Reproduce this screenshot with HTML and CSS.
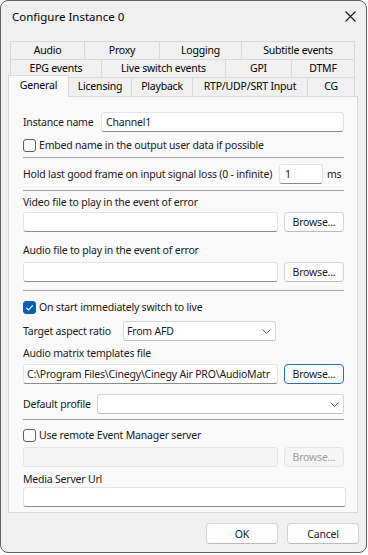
FILE: index.html
```html
<!DOCTYPE html>
<html lang="en">
<head>
  <meta charset="UTF-8" />
  <title>Configure Instance 0</title>
  <link rel="stylesheet" href="styles.css">
</head>
<body>
  <div class="dialog">
    <div class="titlebar">
      <span class="title">Configure Instance 0</span>
      <svg class="close" width="11" height="11" viewBox="0 0 11 11">
        <path d="M0.5 0.5 L10.5 10.5 M10.5 0.5 L0.5 10.5" stroke="#1b1b1b" stroke-width="1.1" fill="none"/>
      </svg>
    </div>

    <div class="content">
      <div class="tabs">
        <div class="tab-row row-a">
          <div class="tab">Audio</div>
          <div class="tab">Proxy</div>
          <div class="tab">Logging</div>
          <div class="tab">Subtitle events</div>
        </div>
        <div class="tab-row row-b">
          <div class="tab">EPG events</div>
          <div class="tab">Live switch events</div>
          <div class="tab">GPI</div>
          <div class="tab">DTMF</div>
        </div>
        <div class="tab-row row-c">
          <div class="tab active">General</div>
          <div class="tab">Licensing</div>
          <div class="tab">Playback</div>
          <div class="tab">RTP/UDP/SRT Input</div>
          <div class="tab">CG</div>
        </div>
      </div>

      <div class="panel">
        <div class="row first">
          <span class="label lbl-instance">Instance name</span>
          <div class="edit grow">Channel1</div>
        </div>

        <div class="row check-row">
          <span class="checkbox"></span>
          <span>Embed name in the output user data if possible</span>
        </div>

        <div class="sep sep-1"></div>

        <div class="row hold-row">
          <span class="label">Hold last good frame on input signal loss (0 - infinite)</span>
          <div class="edit hold">1</div>
          <span class="unit">ms</span>
        </div>

        <div class="sep sep-2"></div>

        <div class="caption cap-video">Video file to play in the event of error</div>
        <div class="row file-row r-video">
          <div class="edit grow"></div>
          <button class="btn browse">Browse...</button>
        </div>

        <div class="caption cap-audio">Audio file to play in the event of error</div>
        <div class="row file-row r-audio">
          <div class="edit grow"></div>
          <button class="btn browse">Browse...</button>
        </div>

        <div class="sep sep-3"></div>

        <div class="row check-row live-row">
          <span class="checkbox checked">
            <svg width="13" height="13" viewBox="0 0 13 13">
              <path d="M3.3 6.8 L5.5 9 L9.8 4.3" stroke="#fff" stroke-width="1.2" fill="none"/>
            </svg>
          </span>
          <span>On start immediately switch to live</span>
        </div>

        <div class="row target-row">
          <span class="label lbl-target">Target aspect ratio</span>
          <div class="combo target">
            <span>From AFD</span>
            <svg width="9" height="5" viewBox="0 0 9 5"><path d="M0.5 0.5 L4.5 4.5 L8.5 0.5" stroke="#5c5c5c" fill="none"/></svg>
          </div>
        </div>

        <div class="caption cap-matrix">Audio matrix templates file</div>
        <div class="row file-row r-matrix">
          <div class="edit grow path">C:\Program Files\Cinegy\Cinegy Air PRO\AudioMatr</div>
          <button class="btn browse focused">Browse...</button>
        </div>

        <div class="row profile-row">
          <span class="label lbl-profile">Default profile</span>
          <div class="combo grow">
            <span></span>
            <svg width="9" height="5" viewBox="0 0 9 5"><path d="M0.5 0.5 L4.5 4.5 L8.5 0.5" stroke="#5c5c5c" fill="none"/></svg>
          </div>
        </div>

        <div class="sep sep-4"></div>

        <div class="row check-row remote-row">
          <span class="checkbox"></span>
          <span>Use remote Event Manager server</span>
        </div>

        <div class="row file-row r-remote">
          <div class="edit grow disabled"></div>
          <button class="btn browse disabled">Browse...</button>
        </div>

        <div class="caption cap-media">Media Server Url</div>
        <div class="row media-row">
          <div class="edit grow"></div>
        </div>
      </div>
    </div>

    <div class="footer">
      <button class="btn dlg-btn">OK</button>
      <button class="btn dlg-btn">Cancel</button>
    </div>
  </div>
</body>
</html>
```

FILE: styles.css
```css
* { box-sizing: border-box; margin: 0; padding: 0; }
body {
  font-family: 'Noto Sans', 'Open Sans', sans-serif;
  font-size: 10.5px;
  letter-spacing: -0.2px;
  color: #1a1a1a;
  background: #ffffff;
}
.dialog {
  width: 367px;
  height: 553px;
  background: #f0f0f0;
  border: 1px solid #5d6066;
  border-radius: 8px;
  display: flex;
  flex-direction: column;
  overflow: hidden;
}
.titlebar {
  height: 30px;
  display: flex;
  align-items: center;
  justify-content: space-between;
  padding: 0 10px 0 11px;
}
.titlebar .title {
  font-size: 11.5px;
  letter-spacing: 0;
  color: #000;
}
.close {
  display: block;
  margin-top: 1px;
}
.content {
  padding: 10px 8px 0 7px;
}

/* tab strip */
.tabs {
  padding: 0 2px;
}
.tab-row {
  display: grid;
  height: 18px;
}
.row-a { grid-template-columns: 74px 75px 82px 114px; }
.row-b { grid-template-columns: 91px 124px 66px 64px; }
.row-c { grid-template-columns: 59px 62px 61px 115px 48px; height: 19px; }
.tab {
  border-top: 1px solid #d9d9d9;
  border-left: 1px solid #d9d9d9;
  background: #f0f0f0;
  text-align: center;
  line-height: 17px;
  white-space: nowrap;
  color: #000;
}
.tab:last-child {
  border-right: 1px solid #d9d9d9;
}
.tab.active {
  margin: -2px 0 -1px -2px;
  background: #f9f9f9;
  border-right: 1px solid #d9d9d9;
  position: relative;
  z-index: 1;
  line-height: 18px;
}
.tab.active + .tab {
  border-left: none;
}

/* page */
.panel {
  background: #f9f9f9;
  border: 1px solid #dadada;
  padding: 15px 13px 5px 14px;
  display: flex;
  flex-direction: column;
}
.row {
  display: flex;
  align-items: center;
  height: 20px;
}
.grow { flex: 1; min-width: 0; }
.label {
  white-space: nowrap;
  flex: none;
}
.lbl-instance { width: 78px; }
.lbl-target { width: 100px; }
.lbl-profile { width: 74px; }

.edit {
  height: 20px;
  background: #fff;
  border: 1px solid #e3e3e3;
  border-bottom-color: #8b8b8b;
  border-radius: 3px;
  padding: 0 4px;
  line-height: 18px;
  white-space: nowrap;
  overflow: hidden;
}
.edit.path { padding-left: 3px; padding-right: 0; }
.edit.disabled {
  background: #f5f5f5;
  border-color: #e5e5e5;
}
.hold {
  width: 44px;
  margin-left: auto;
  padding-left: 5px;
}
.unit {
  width: 21px;
  padding-left: 4px;
}

.combo {
  height: 20px;
  background: #fff;
  border: 1px solid #d6d6d6;
  border-bottom-color: #bdbdbd;
  border-radius: 3px;
  display: flex;
  align-items: center;
  justify-content: space-between;
  padding: 0 4px 0 3px;
}
.combo.target { width: 153px; }
.combo svg { display: block; }

.btn {
  font: inherit;
  letter-spacing: inherit;
  color: #1a1a1a;
  height: 20px;
  background: #fdfdfd;
  border: 1px solid #d4d4d4;
  border-bottom-color: #bcbcbc;
  border-radius: 4px;
}
.browse {
  width: 60px;
  margin-left: 6px;
  flex: none;
}
.browse.focused {
  border: 1px solid #1f6fc2;
}
.browse.disabled {
  color: #a0a0a0;
  background: #f5f5f5;
  border-color: #e5e5e5;
}

.checkbox {
  width: 13px;
  height: 13px;
  border: 1px solid #5f5f5f;
  border-radius: 3px;
  background: #fbfbfb;
  margin-right: 3px;
  flex: none;
}
.checkbox.checked {
  background: #005fb8;
  border-color: #005fb8;
}
.checkbox svg { display: block; margin: -1px; }

.sep {
  height: 1px;
  background: #a0a0a0;
  flex: none;
}
.caption {
  height: 14px;
  line-height: 14px;
  white-space: nowrap;
}

/* vertical rhythm */
.check-row { margin-top: 3px; }
.sep-1 { margin-top: 2px; }
.hold-row { margin-top: 6px; }
.sep-2 { margin-top: 6px; }
.cap-video { margin-top: 4px; }
.r-video { margin-top: 3px; }
.cap-audio { margin-top: 11px; }
.r-audio { margin-top: 5px; }
.sep-3 { margin-top: 8px; }
.live-row { margin-top: 6px; }
.target-row { margin-top: 4px; }
.cap-matrix { margin-top: 5px; }
.r-matrix { margin-top: 4px; }
.profile-row { margin-top: 10px; }
.sep-4 { margin-top: 5px; }
.remote-row { margin-top: 5px; }
.r-remote { margin-top: 2px; }
.cap-media { margin-top: 5px; }
.media-row { margin-top: 1px; margin-right: -2px; }

.footer {
  display: flex;
  justify-content: flex-end;
  gap: 9px;
  padding: 10px 7px 0 0;
}
.dlg-btn {
  width: 72px;
  height: 21px;
}
```
